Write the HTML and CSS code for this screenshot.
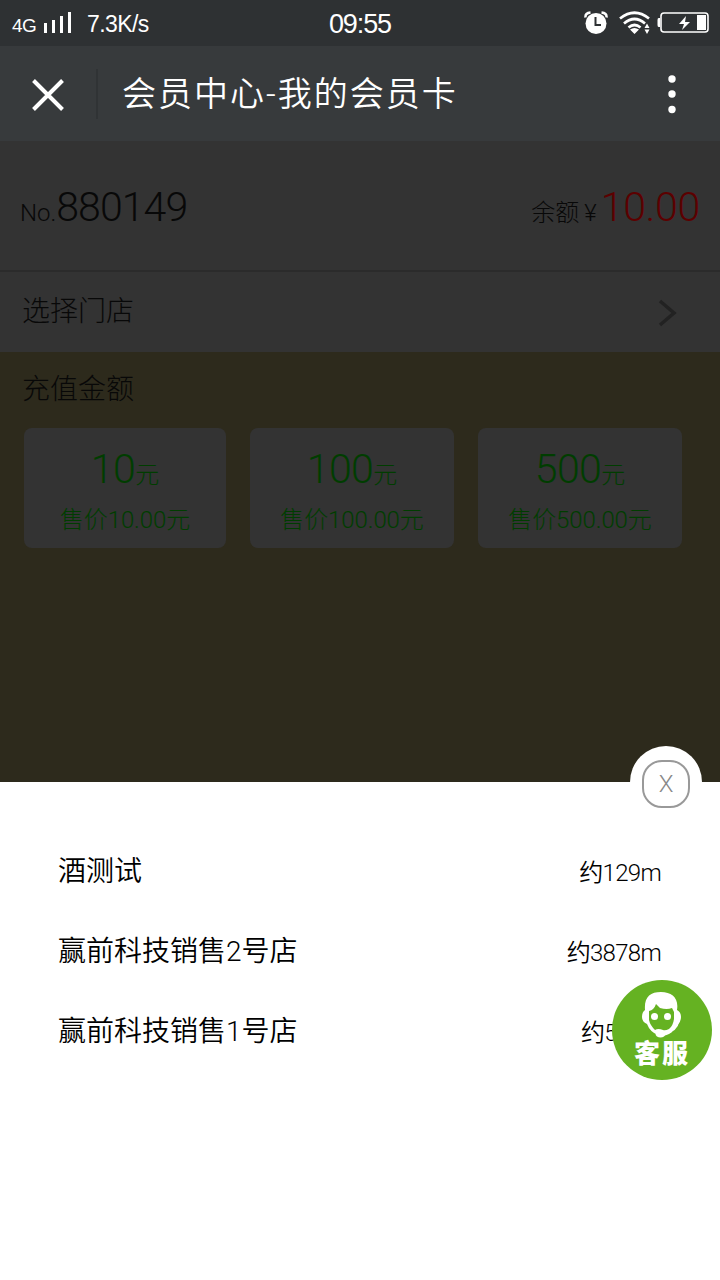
FILE: index.html
```html
<!DOCTYPE html>
<html lang="zh-CN">
<head>
<meta charset="utf-8">
<title>会员中心-我的会员卡</title>
<link rel="stylesheet" href="styles.css">
</head>
<body>
<header class="status">
  <div class="status-left">
    <span class="net">4G</span>
    <svg class="signal" width="29" height="22" viewBox="0 0 29 22" fill="#fff"><path d="M1 11h3v10H1zM9 8h3v13H9zM17 4h3v17h-3zM25 0h3v21h-3z"/></svg>
    <span class="speed">7.3K/s</span>
  </div>
  <span class="clock">09:55</span>
  <div class="status-right">
    <svg width="24" height="24" viewBox="0 0 24 24"><circle cx="12" cy="12.500" r="10.500" fill="#fff"/><path d="M1.500 6.500Q1 2 6.500 1.500M17.500 1.500Q23 2 22.500 6.500" fill="none" stroke="#fff" stroke-width="2.500"/><path d="M11.500 6v8h5.500" fill="none" stroke="#2e3133" stroke-width="2"/></svg>
    <svg class="wifi" width="31" height="24" viewBox="0 0 31 24"><g fill="none" stroke="#fff" stroke-width="2.700"><path d="M1 7.500Q15.500-4 30 7.500M5 12.500Q15.500 3.500 26 12.500M9.500 16.500Q15.500 11.500 21.500 16.500"/></g><path d="M11 18.500q4.500-3 9 0l-4.500 4.500zM25.500 17l2.500-4.500 2.500 4.500zM25.500 18.500h5l-2.500 4.500z" fill="#fff"/></svg>
    <svg class="battery" width="52" height="24" viewBox="0 0 52 24"><rect x="4" y="2" width="47" height="19" rx="3" fill="none" stroke="#fff" stroke-width="1.600"/><path d="M3 7H1.700Q.5 7 .5 9v5q0 2 1.200 2H3zM40 4h9v15h-9zM29 5l-7 8h5l-2 6 8-8h-5z" fill="#fff"/></svg>
  </div>
</header>
<nav class="nav">
  <svg class="back" width="32" height="32" viewBox="0 0 32 32" stroke="#fff" stroke-width="4"><path d="M1.500 1.500l29 29M30.500 1.500l-29 29"/></svg>
  <i class="rule"></i>
  <h1 class="title">会员中心-我的会员卡</h1>
  <svg class="more" width="10" height="40" viewBox="0 0 10 40" fill="#fff"><circle cx="5" cy="5" r="3.700"/><circle cx="5" cy="20" r="3.700"/><circle cx="5" cy="35.500" r="3.700"/></svg>
</nav>
<section class="account">
  <div class="number"><span>No.</span><b>880149</b></div>
  <div class="balance"><span>余额</span><span class="yen">¥</span><b>10.00</b></div>
</section>
<section class="store">
  <span>选择门店</span>
  <svg width="20" height="28" viewBox="0 0 20 28" fill="none" stroke="#222" stroke-width="3.500"><path d="M2 2l14 12L2 26"/></svg>
</section>
<main class="recharge">
  <h2 class="recharge-title">充值金额</h2>
  <div class="cards">
    <div class="card"><div class="amount"><b>10</b>元</div><div class="price">售价10.00元</div></div>
    <div class="card"><div class="amount"><b>100</b>元</div><div class="price">售价100.00元</div></div>
    <div class="card"><div class="amount"><b>500</b>元</div><div class="price">售价500.00元</div></div>
  </div>
</main>
<section class="sheet">
  <div class="close"><span class="close-ring">X</span></div>
  <div class="shop"><span>酒测试</span><span class="distance">约129m</span></div>
  <div class="shop"><span>赢前科技销售2号店</span><span class="distance">约3878m</span></div>
  <div class="shop"><span>赢前科技销售1号店</span><span class="distance covered">约5</span></div>
  <div class="service">
    <svg width="42" height="48" viewBox="0 0 42 48">
      <path d="M4 19C3 6 9 1 20 1s18 6 16 18q4 2 4 7t-4 8q-2 6-8 9-5 3-11 1Q9 41 6 33q-5-2-5-7 0-5 3-7z" fill="#fff"/>
      <path d="M8 20q5-1 7-7l4 4q7 2 12 0l2 4v7q-1 7-5 10-4 2-6 1-5-2-8 0-5-5-6-10z" fill="#65b222"/>
      <path d="M31 39l6-5 2 4-7 6z" fill="#65b222"/>
      <circle cx="13.500" cy="25.500" r="3.500" fill="#fff"/><circle cx="26.500" cy="25.500" r="3.500" fill="#fff"/>
      <path d="M37 30q-2 10-14 12" fill="none" stroke="#fff" stroke-width="3"/>
      <ellipse cx="19.500" cy="43" rx="5" ry="3.500" fill="#fff"/>
    </svg>
    <span class="service-text">客服</span>
  </div>
</section>
</body>
</html>
```
FILE: styles.css
```css
* { box-sizing: border-box; }
body {
  margin: 0;
  width: 720px;
  height: 1280px;
  display: flex;
  flex-direction: column;
  overflow: hidden;
  background: #fff;
  font-family: Roboto, "Noto Sans CJK SC", sans-serif;
  font-weight: 300;
  color: #000;
}
svg { display: block; flex: none; }
b, h1, h2 { font-weight: inherit; margin: 0; }
span { white-space: nowrap; }

.status {
  height: 46px;
  flex: none;
  display: grid;
  grid-template-columns: 1fr auto 1fr;
  align-items: center;
  padding: 0 11px 0 12px;
  background: #2e3133;
  color: #fff;
  font-family: "Liberation Sans", sans-serif;
  font-weight: 400;
}
.status-left, .status-right { display: flex; align-items: center; }
.status-right { justify-content: flex-end; }
.net { font-size: 19px; letter-spacing: -0.5px; width: 31px; padding-top: 5px; }
.speed { font-size: 23px; letter-spacing: -0.6px; margin-left: 15px; padding-top: 2px; }
.clock { font-size: 27px; letter-spacing: -1.1px; padding-top: 2px; margin-right: 1px; }
.wifi { margin-left: 11px; }
.battery { margin-left: 7px; }

.nav {
  height: 95px;
  flex: none;
  display: flex;
  align-items: center;
  padding: 0 43px 0 32px;
  background: #373a3c;
  color: #fff;
}
.back { margin-top: 2px; }
.rule { width: 2px; height: 50px; margin: 0 24px 0 32px; background: #303335; }
.title { font-size: 34px; font-weight: 350; letter-spacing: 2px; line-height: 48px; flex: 1; padding-top: 1px; }
.more { margin-top: 1px; }

.account {
  height: 131px;
  flex: none;
  display: flex;
  justify-content: space-between;
  padding: 36px 20px 0 20px;
  background: #333;
  border-bottom: 2px solid #2b2b2b;
  font-size: 24px;
  line-height: 60px;
  color: #080808;
}
.number, .balance { display: flex; align-items: baseline; }
.account b { font-size: 41px; letter-spacing: -0.3px; }
.number b { letter-spacing: -0.9px; }
.yen { margin: 0 4px 0 5px; }
.balance b { color: #5c0000; }

.store {
  height: 80px;
  flex: none;
  display: flex;
  align-items: center;
  justify-content: space-between;
  padding: 0 42px 2px 22px;
  background: #333;
  font-size: 28px;
  color: #080808;
}
.store span { padding-bottom: 4px; }
.store svg { margin-top: 4px; }

.recharge {
  height: 430px;
  flex: none;
  padding: 14px 38px 0 24px;
  background: #2d2a1c;
}
.recharge-title { font-size: 28px; line-height: 48px; margin-left: -2px; color: #080808; }
.cards { display: grid; grid-template-columns: 202px 204px 204px; gap: 24px; margin-top: 14px; }
.card {
  height: 120px;
  border-radius: 8px;
  background: #333;
  color: #003d00;
  text-align: center;
  padding-top: 14px;
}
.amount { font-size: 24px; line-height: 54px; }
.amount b { font-size: 41px; letter-spacing: -0.6px; }
.price { font-size: 24px; line-height: 44px; margin-top: -4px; letter-spacing: -0.1px; }

.sheet {
  flex: 1;
  position: relative;
  padding: 47px 59px 0 58px;
  background: #fff;
}
.shop {
  height: 80px;
  display: flex;
  align-items: center;
  justify-content: space-between;
  font-size: 28px;
  font-weight: 350;
}
.distance { font-size: 24px; letter-spacing: -0.7px; padding-top: 2px; }
.covered { width: 80px; }
.close {
  position: absolute;
  top: -36px;
  right: 18px;
  width: 72px;
  height: 72px;
  border-radius: 50%;
  background: #fff;
  display: flex;
  justify-content: center;
  padding-top: 14px;
}
.close-ring {
  width: 48px;
  height: 48px;
  border: 2px solid #999;
  border-radius: 20px;
  color: #888;
  font-size: 24px;
  line-height: 45px;
  text-align: center;
}
.service {
  position: absolute;
  top: 198px;
  right: 8px;
  width: 100px;
  height: 100px;
  border-radius: 50%;
  background: #65b222;
  display: flex;
  flex-direction: column;
  align-items: center;
  padding-top: 11px;
}
.service-text {
  color: #fff;
  font-family: "Noto Sans CJK SC", sans-serif;
  font-weight: 900;
  font-size: 26px;
  letter-spacing: 2px;
  line-height: 28px;
  margin-top: -1px;
}
```
